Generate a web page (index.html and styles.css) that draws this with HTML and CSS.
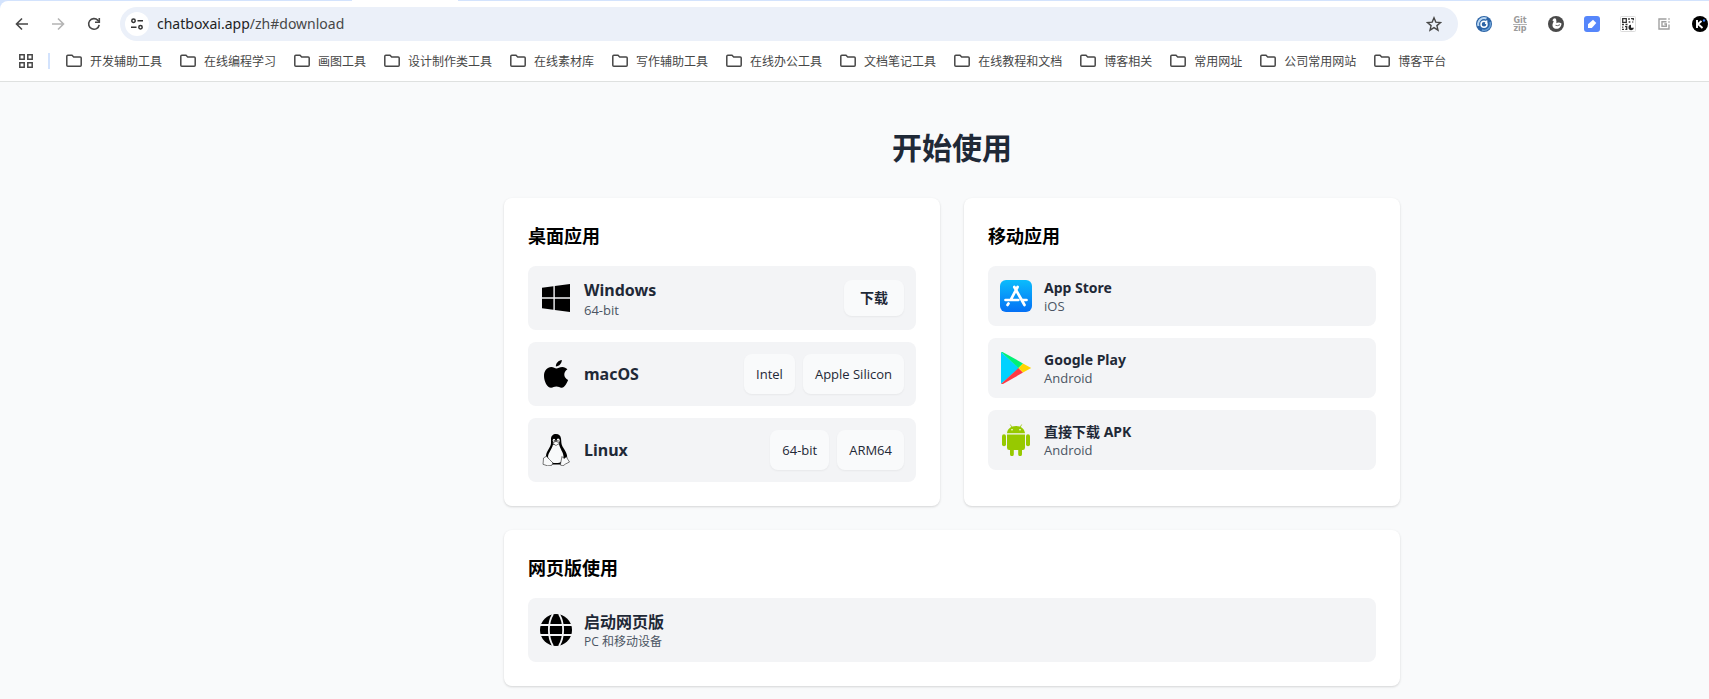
FILE: index.html
```
<!DOCTYPE html>
<html lang="zh">
<head>
  <meta charset="UTF-8">
  <title>Chatbox</title>
  <meta name="viewport" content="width=device-width, initial-scale=1">
  <link rel="stylesheet" href="styles.css">
</head>
<body>

<svg width="0" height="0" class="sprite" aria-hidden="true">
  <symbol id="folder" viewBox="0 0 16 16">
    <path d="M.8 3.300Q.8 2.300 1.800 2.300H6l1.700 1.700h6.500Q15.200 4 15.200 5v7.300q0 1-1 1H1.800q-1 0-1-1z" fill="none" stroke="#474747" stroke-width="1.500"/>
  </symbol>
</svg>

<header class="browser">
  <div class="tabstrip"><span class="tab"></span></div>
  <div class="toolbar">
    <nav class="nav">
      <button class="icon-btn" aria-label="后退">
        <svg width="16" height="16" viewBox="0 0 16 16"><path d="M14 8H3M8 2.500 2.500 8 8 13.500" fill="none" stroke="#474747" stroke-width="1.600"/></svg>
      </button>
      <button class="icon-btn" aria-label="前进" disabled>
        <svg width="16" height="16" viewBox="0 0 16 16"><path d="M2 8h11M8 2.500 13.500 8 8 13.500" fill="none" stroke="#b4b4b4" stroke-width="1.600"/></svg>
      </button>
      <button class="icon-btn" aria-label="刷新">
        <svg width="16" height="16" viewBox="0 0 16 16"><path d="M13.200 8.800A5.300 5.300 0 1 1 11.900 4.400L13 5.500" fill="none" stroke="#474747" stroke-width="1.600"/><path d="M13.300 2v4.200H9" fill="none" stroke="#474747" stroke-width="1.600"/></svg>
      </button>
    </nav>
    <div class="omnibox">
      <button class="site-info" aria-label="网站信息">
        <svg width="14" height="14" viewBox="0 0 14 14" fill="none" stroke="#333" stroke-width="1.500"><circle cx="3.500" cy="3.700" r="1.700"/><path d="M7.500 3.700H13M1 10.300h5.500"/><circle cx="10.500" cy="10.300" r="1.700"/></svg>
      </button>
      <div class="url">chatboxai.app<span>/zh#download</span></div>
      <button class="icon-btn" aria-label="添加书签">
        <svg width="16" height="16" viewBox="0 0 16 16"><path d="M8 1.800l1.800 4.300 4.700.4-3.600 3.100 1.100 4.600L8 11.700l-4 2.500 1.100-4.600L1.500 6.500l4.700-.4z" fill="none" stroke="#474747" stroke-width="1.400"/></svg>
      </button>
    </div>
    <div class="extensions">
      <button class="icon-btn" aria-label="扩展 1">
        <svg width="16" height="16" viewBox="0 0 16 16"><circle cx="8" cy="8" r="8" fill="#2c64a6"/><path d="M2.500 10A6 6 0 0 1 10.500 2.500" fill="none" stroke="#b9d7f3" stroke-width="2"/><path d="M14 6A6.300 6.300 0 0 1 6 14" fill="none" stroke="#6da2d8" stroke-width="1.400"/><circle cx="8" cy="8.300" r="3" fill="#2c64a6" stroke="#fff" stroke-width="1.500"/><path d="M11 4.500 9.500 8" stroke="#fff" stroke-width="1.500"/></svg>
      </button>
      <button class="icon-btn gitzip" aria-label="GitZip"><span>Git</span><span>zip</span></button>
      <button class="icon-btn" aria-label="扩展 3">
        <svg width="16" height="16" viewBox="0 0 16 16"><circle cx="8" cy="8" r="8" fill="#4a4a4a"/><path d="M4.300 4.300 6 2.300l2 .5.5 3.200-.3 1.200c1.500-.8 3.500-.9 5.300.3-.1 3-2.200 5.300-5 5.300S4 10.800 4.600 8l1.100-2.800z" fill="#fff"/><path d="M7.500 9.300q2 1 4.500-.6" fill="none" stroke="#4a4a4a" stroke-width=".8"/></svg>
      </button>
      <button class="icon-btn" aria-label="扩展 4">
        <svg width="16" height="16" viewBox="0 0 16 16"><rect width="16" height="16" rx="3" fill="#5686fb"/><path d="M4 12V8.300l5-4.500 3.300 3.300-4.500 4.900z" fill="#fff"/></svg>
      </button>
      <button class="icon-btn" aria-label="二维码">
        <svg width="16" height="16" viewBox="0 0 16 16"><rect x=".5" y=".5" width="15" height="15" rx="1" fill="#fff" stroke="#dcdcdc"/><path d="M2.700 2.700h3.600v3.600H2.700zM9 2v2M8.700 6h1.600M11 2.700h2.300v1.600M12.700 5.500v1M2 8.500h2M5.500 8.500h2M2.700 10.500v1.300M2 13.300h2M5 10.700h1.700v2.600H5.300" fill="none" stroke="#333" stroke-width="1.300"/><path d="M11 8.800a2.700 2.700 0 1 0 2.900 2.900H11z" fill="#222"/></svg>
      </button>
      <button class="icon-btn" aria-label="扩展 6">
        <svg width="16" height="16" viewBox="0 0 16 16" fill="none" stroke="#a0a0a0" stroke-width="1.400"><path d="M10.500 3H3v10h10V8.500M10.500 5.700H6v4.600h4.300V8H8.300M13 2.300v1.500M13 5.300v1.500"/></svg>
      </button>
      <button class="icon-btn" aria-label="扩展 7">
        <svg width="16" height="16" viewBox="0 0 16 16"><circle cx="8" cy="8" r="8" fill="#000"/><path d="M5 4v8M9.500 5 6 8l4.500 4" fill="none" stroke="#fff" stroke-width="1.900"/><circle cx="12" cy="4.500" r="1.200" fill="#3b82f6"/></svg>
      </button>
    </div>
  </div>
  <nav class="bookmarks">
    <button class="icon-btn apps" aria-label="应用">
      <svg width="14" height="14" viewBox="0 0 14 14" fill="none" stroke="#474747" stroke-width="1.500"><path d="M.8.8h4.400v4.400H.8zM8.800.8h4.400v4.400H8.800zM.8 8.800h4.400v4.400H.8zM8.800 8.800h4.400v4.400H8.800z"/></svg>
    </button>
    <span class="divider"></span>
    <button class="bookmark"><svg><use href="#folder"/></svg>开发辅助工具</button>
    <button class="bookmark"><svg><use href="#folder"/></svg>在线编程学习</button>
    <button class="bookmark"><svg><use href="#folder"/></svg>画图工具</button>
    <button class="bookmark"><svg><use href="#folder"/></svg>设计制作类工具</button>
    <button class="bookmark"><svg><use href="#folder"/></svg>在线素材库</button>
    <button class="bookmark"><svg><use href="#folder"/></svg>写作辅助工具</button>
    <button class="bookmark"><svg><use href="#folder"/></svg>在线办公工具</button>
    <button class="bookmark"><svg><use href="#folder"/></svg>文档笔记工具</button>
    <button class="bookmark"><svg><use href="#folder"/></svg>在线教程和文档</button>
    <button class="bookmark"><svg><use href="#folder"/></svg>博客相关</button>
    <button class="bookmark"><svg><use href="#folder"/></svg>常用网址</button>
    <button class="bookmark"><svg><use href="#folder"/></svg>公司常用网站</button>
    <button class="bookmark"><svg><use href="#folder"/></svg>博客平台</button>
  </nav>
</header>

<main class="page">
  <div class="container">
    <h1>开始使用</h1>
    <div class="cards">
      <section class="card">
        <h2>桌面应用</h2>
        <div class="row">
          <svg class="logo" viewBox="0 0 32 32"><path d="M2 5.800 13.400 4.200v11.100H2zM14.800 4 30 2v13.300H14.800zM2 16.800h11.400v11L2 26.200zM14.800 16.800H30V30l-15.200-2z"/></svg>
          <div class="info"><strong>Windows</strong><small>64-bit</small></div>
          <div class="actions"><a href="#download" class="btn primary">下载</a></div>
        </div>
        <div class="row">
          <svg class="logo" viewBox="0 0 32 32"><path d="M21.800 2c.2 2.900-2.500 6.400-5.900 6.400C15.600 5.300 18.700 2.300 21.800 2zM27.400 11.300c-4.600 2.900-3.800 8.800.7 10.600-1.200 3.300-3.500 7.400-6.300 7.900-2 .2-3-1.200-5.400-1.200s-3.300 1.200-5.300 1.200C7.200 29.800 4 23.300 4 18c0-5.500 3.300-9 7.300-9 2.200 0 3.700 1.400 5.200 1.400 1.400 0 3.100-1.500 5.900-1.500 1.900 0 3.800.9 5 2.400z"/></svg>
          <div class="info"><strong>macOS</strong></div>
          <div class="actions"><a href="#intel" class="btn">Intel</a><a href="#silicon" class="btn">Apple Silicon</a></div>
        </div>
        <div class="row">
          <svg class="logo" viewBox="0 0 32 32">
            <path d="M16 0c-3 0-5 2-5 5 0 4 .4 5.500-1.500 8.500C7.500 17 6 19 6 22l-.5 3 6 5.500h10l5.500-6c1-4-2-8-4.500-12C21 9.500 21.500 8 21 4.500 20.600 1.500 19 0 16 0z"/>
            <path d="M13 10.500c-1 4.500-4.500 8-5 12 0 3 3.300 6.500 6 6.500h4c3 0 5.500-3 5.500-6.500 0-4-3.500-7.500-4.500-12.500l-3 1.500z" fill="#f8f9fa"/>
            <ellipse cx="14" cy="6.500" rx="1.300" ry="1.800" fill="#fff"/><ellipse cx="18.200" cy="6.500" rx="1.500" ry="1.900" fill="#fff"/>
            <circle cx="14.300" cy="6.900" r=".7"/><circle cx="17.900" cy="6.900" r=".7"/>
            <path d="M12.700 9l3.300-1.500L19.500 9 16 11.500z" fill="#fff" stroke="#777" stroke-width=".5"/>
            <path d="M3.500 24l3-1.800 3 3.300 3.500 3.500-1.500 2.500-4 .3-4.500-1.500.3-3.300zM22 22.500l2 2 2.500-1.800 1.200 2.500 1.800 2.800-4 2-2.500 1.800-2.700-.8z" fill="#f8f9fa" stroke="#222" stroke-width=".6"/>
          </svg>
          <div class="info"><strong>Linux</strong></div>
          <div class="actions"><a href="#x64" class="btn">64-bit</a><a href="#arm64" class="btn">ARM64</a></div>
        </div>
      </section>

      <section class="card">
        <h2>移动应用</h2>
        <a href="#ios" class="row compact">
          <svg class="logo" viewBox="0 0 32 32">
            <defs><linearGradient id="sky" x2="0" y2="1"><stop stop-color="#0bbcfc"/><stop offset="1" stop-color="#0470f5"/></linearGradient></defs>
            <rect width="32" height="32" rx="6" fill="url(#sky)"/>
            <path d="M17.600 7 11 19.300M14.300 7 24.500 25M5.500 20h12.800M23 20h3.500M8.500 23.500 7.500 25" fill="none" stroke="#fff" stroke-width="2.700" stroke-linecap="round"/>
          </svg>
          <div class="info"><strong>App Store</strong><small>iOS</small></div>
        </a>
        <a href="#play" class="row compact">
          <svg class="logo" viewBox="0 0 32 32"><path d="M1 0v32l18-16z" fill="#00d2ff"/><path d="M1 0h1.500L23 11.400 18.500 16z" fill="#00f076"/><path d="M1 32h2l20-11.400L18.500 16z" fill="#ff3a44"/><path d="M23 11.400l8.200 4.600L23 20.600 18.500 16z" fill="#ffd500"/></svg>
          <div class="info"><strong>Google Play</strong><small>Android</small></div>
        </a>
        <a href="#apk" class="row compact">
          <svg class="logo" viewBox="0 0 32 32" fill="#97c900"><path d="M7 9.300C7.200 5.500 10.500 2 16 2s8.800 3.500 9 7.300zM7 10.500h18v13.300q0 2.200-2.200 2.200H22v4.200a1.900 1.900 0 0 1-3.800 0V26h-4.400v4.200a1.900 1.900 0 0 1-3.800 0V26h-.8Q7 26 7 23.800z"/><rect x="2" y="10.300" width="4" height="12" rx="2"/><rect x="26" y="10.300" width="4" height="12" rx="2"/><path d="M12 3.500 10.300.5M20 3.500 21.700.5" stroke="#97c900" stroke-width=".8"/><circle cx="12" cy="5.800" r=".8" fill="#fff"/><circle cx="20" cy="5.800" r=".8" fill="#fff"/></svg>
          <div class="info"><strong>直接下载 APK</strong><small>Android</small></div>
        </a>
      </section>

      <section class="card wide">
        <h2>网页版使用</h2>
        <a href="#web" class="row">
          <svg class="logo" viewBox="0 0 32 32"><circle cx="16" cy="16" r="16"/><path d="M0 11h32M0 21h32M13 0C7.500 9 7.500 23 13 32M19 0c5.500 9 5.500 23 0 32" fill="none" stroke="#f3f4f6" stroke-width="1.800"/></svg>
          <div class="info"><strong>启动网页版</strong><small class="zh">PC 和移动设备</small></div>
        </a>
      </section>
    </div>
  </div>
</main>

</body>
</html>
```

FILE: styles.css
```
* {
  box-sizing: border-box;
}

body {
  margin: 0;
  background: #f9fafb;
  color: #1f2937;
  font-family: "Noto Sans", "Noto Sans CJK SC", sans-serif;
  min-height: 100vh;
}

button {
  border: none;
  background: none;
  padding: 0;
  font-family: inherit;
  cursor: pointer;
}

a {
  color: inherit;
  text-decoration: none;
}

.sprite {
  display: block;
}

/* browser bar */
.browser {
  background: #d3e3fd;
  border-bottom: 1px solid #dfe1e0;
}

.tabstrip {
  height: 1px;
  padding-left: 352px;
}

.tab {
  display: block;
  width: 106px;
  height: 1px;
  background: #fff;
}

.toolbar {
  display: flex;
  align-items: center;
  height: 46px;
  padding-left: 14px;
  border-top-left-radius: 8px;
  background: #fff;
}

.nav {
  display: flex;
  gap: 20px;
}

.icon-btn {
  display: flex;
  align-items: center;
  justify-content: center;
  width: 16px;
  height: 16px;
  flex-shrink: 0;
}

.omnibox {
  flex: 1;
  display: flex;
  align-items: center;
  height: 34px;
  margin-left: 18px;
  padding: 0 16px 0 5px;
  border-radius: 17px;
  background: #ebf0f9;
}

.site-info {
  display: flex;
  align-items: center;
  justify-content: center;
  width: 24px;
  height: 24px;
  border-radius: 50%;
  background: #fff;
}

.url {
  flex: 1;
  margin-left: 8px;
  font-size: 14px;
  line-height: 20px;
  color: #1f1f1f;
}

.url span {
  color: #474747;
}

.extensions {
  display: flex;
  gap: 20px;
  padding-left: 18px;
  padding-right: 1px;
}

.gitzip {
  flex-direction: column;
  font: bold 8px/7px "DejaVu Sans", sans-serif;
  color: #9b9b9b;
}

.gitzip span:first-child {
  border-bottom: 1px solid #b5b5b5;
}

.bookmarks {
  display: flex;
  align-items: center;
  height: 34px;
  padding: 0 18px 6px;
  background: #fff;
}

.divider {
  width: 2px;
  height: 16px;
  margin: 0 16px 0 14px;
  background: #d3e3fd;
}

.bookmark {
  display: flex;
  align-items: center;
  gap: 8px;
  margin-right: 18px;
  font-size: 12px;
  color: #474747;
  white-space: nowrap;
}

.bookmark svg {
  width: 16px;
  height: 16px;
}

/* page */
.page {
  padding: 48px 0 12px 195px;
}

.container {
  max-width: 896px;
  margin: 0 auto;
}

h1 {
  margin: 0 0 32px;
  font-size: 30px;
  line-height: 36px;
  text-align: center;
}

.cards {
  display: grid;
  grid-template-columns: 1fr 1fr;
  gap: 24px;
}

.card {
  display: flex;
  flex-direction: column;
  gap: 12px;
  padding: 24px;
  border-radius: 8px;
  background: #fff;
  box-shadow: 0 1px 3px rgba(0, 0, 0, 0.1), 0 1px 2px rgba(0, 0, 0, 0.06);
}

.card.wide {
  grid-column: span 2;
}

h2 {
  margin: 0 0 4px;
  font-size: 18px;
  line-height: 28px;
  color: #000;
}

.row {
  display: flex;
  align-items: center;
  gap: 12px;
  min-height: 64px;
  padding: 8px 12px;
  border-radius: 8px;
  background: #f3f4f6;
}

.row.compact {
  min-height: 60px;
}

.logo {
  width: 32px;
  height: 32px;
  flex-shrink: 0;
}

.info {
  flex: 1;
  display: flex;
  flex-direction: column;
}

.info strong {
  font-size: 16px;
  line-height: 24px;
}

.compact .info strong {
  font-size: 14px;
  line-height: 20px;
}

.info small {
  font-family: "Open Sans", "Noto Sans CJK SC", sans-serif;
  font-size: 13px;
  line-height: 16px;
  color: #4b5563;
}

.info .zh {
  font-size: 12px;
}

.actions {
  display: flex;
  gap: 8px;
}

.btn {
  padding: 12px;
  border-radius: 8px;
  background: #f9fafb;
  box-shadow: 0 1px 2px rgba(0, 0, 0, 0.05);
  font-family: "Open Sans", "Noto Sans CJK SC", sans-serif;
  font-size: 13px;
  line-height: 16px;
}

.btn.primary {
  padding: 8px 16px;
  font-size: 14px;
  line-height: 20px;
  font-weight: bold;
}
```
